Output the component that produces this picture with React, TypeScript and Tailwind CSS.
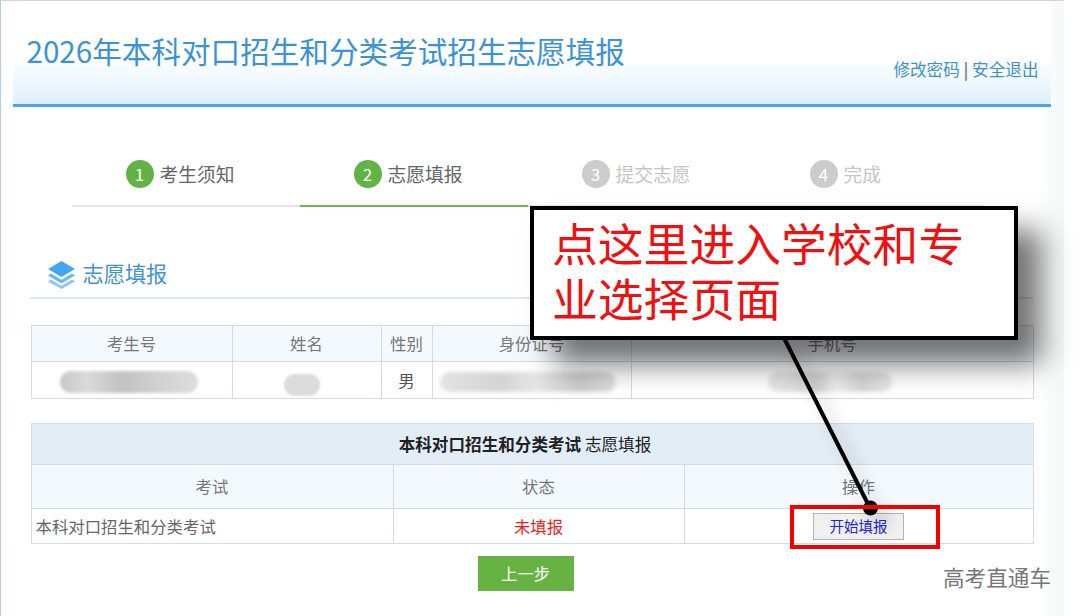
const steps = [
  { n: 1, label: "考生须知", done: true, active: false },
  { n: 2, label: "志愿填报", done: true, active: true },
  { n: 3, label: "提交志愿", done: false, active: false },
  { n: 4, label: "完成", done: false, active: false },
];

function LayersIcon() {
  return (
    <svg width="27" height="28" viewBox="0 0 27 28">
      <path d="M13.5 0 L27 8 L13.5 16 L0 8 Z" fill="#45a5f5" />
      <path d="M3 12.5 L0 14.5 L13.5 22.5 L27 14.5 L24 12.5 L13.5 18.8 Z" fill="#6db8ee" />
      <path d="M3 18.5 L0 20.5 L13.5 28 L27 20.5 L24 18.5 L13.5 24.8 Z" fill="#8cc8f0" />
    </svg>
  );
}

export default function App() {
  return (
    <div className="relative w-[1080px] h-[616px] overflow-hidden bg-white font-['Noto_Sans_CJK_SC',sans-serif]">
      <div className="h-[616px] w-[1064px] border-t border-l-[1.5px] border-t-[#d4d4d4] border-l-[#b5cfe0] bg-gradient-to-r from-white from-[97.5%] to-[#f3f8f8]">
        <div className="ml-[11.5px] flex h-[106px] w-[1038px] items-start justify-between border-b-[3px] border-[#4ba4e6] bg-gradient-to-b from-white from-[55%] to-[#dff0fc] pl-[14px] pr-[12px]">
          <h1 className="mt-[29px] text-[29.6px] leading-[42px] text-[#3a93d6]">2026年本科对口招生和分类考试招生志愿填报</h1>
          <div className="mt-[56px] text-[16.6px] leading-6 text-[#3f93c9]">
            修改密码 <span className="font-bold text-[#7d7d7d]">|</span> 安全退出
          </div>
        </div>

        <div className="ml-[70.5px] mt-[53px] flex w-[912px]">
          {steps.map((step) => (
            <div
              key={step.n}
              className={`flex w-[228px] items-center gap-[6px] border-b-2 pb-[17px] pl-[54px] ${step.active ? "border-[#6cb84a]" : "border-[#e6e6e6]"}`}
            >
              <span
                className={`flex h-[28px] w-[28px] items-center justify-center rounded-full text-[17px] text-white ${step.done ? "bg-[#62b345]" : "bg-[#cccccc]"}`}
              >
                {step.n}
              </span>
              <span className={`text-[18.8px] leading-7 ${step.done ? "text-[#666666]" : "text-[#c6c6c6]"}`}>{step.label}</span>
            </div>
          ))}
        </div>

        <div className="ml-[28.5px] mt-[54px] flex h-[38px] w-[1003px] items-start gap-[8px] border-b-2 border-[#d8e7f2] pl-[18px]">
          <LayersIcon />
          <span className="text-[21.2px] leading-[24px] text-[#3f93d0]">志愿填报</span>
        </div>

        <table className="ml-[29.5px] mt-[26px] w-[1003px] table-fixed border-collapse text-center text-[16.4px] text-[#777777]">
          <colgroup>
            <col className="w-[201px]" />
            <col className="w-[149px]" />
            <col className="w-[51px]" />
            <col className="w-[199px]" />
            <col />
          </colgroup>
          <tbody>
            <tr className="h-[36px] bg-[#f4f9fe]">
              {["考生号", "姓名", "性别", "身份证号", "手机号"].map((title) => (
                <td key={title} className="border border-[#cfdce9]">{title}</td>
              ))}
            </tr>
            <tr className="h-[37px]">
              <td className="border border-[#cfdce9] pr-[5px]">
                <span className="inline-block h-[22px] w-[138px] rounded-full bg-[linear-gradient(90deg,#c8c8c8,#dadada_20%,#c2c2c2_45%,#d0d0d0_70%,#dedede)] align-middle blur-[1.5px]" />
              </td>
              <td className="border border-[#cfdce9] pr-[10px]">
                <span className="inline-block h-[22px] w-[36px] translate-y-[3px] rounded-full bg-[#dcdcdc] align-middle blur-[1px]" />
              </td>
              <td className="border border-[#cfdce9] text-[#555555]">男</td>
              <td className="border border-[#cfdce9] pr-[8px]">
                <span className="inline-block h-[20px] w-[176px] rounded-full bg-[linear-gradient(90deg,#e2e2e2,#d4d4d4_35%,#e6e6e6_55%,#cccccc_80%,#dddddd)] align-middle blur-[2px]" />
              </td>
              <td className="border border-[#cfdce9] pr-[4px]">
                <span className="inline-block h-[20px] w-[124px] rounded-full bg-[linear-gradient(90deg,#e8e8e8,#d8d8d8_40%,#eeeeee_55%,#d6d6d6_75%,#e8e8e8)] align-middle blur-[2px]" />
              </td>
            </tr>
          </tbody>
        </table>

        <table className="ml-[29.5px] mt-[24px] w-[1003px] table-fixed border-collapse text-center text-[16.4px] text-[#777777]">
          <colgroup>
            <col className="w-[362px]" />
            <col className="w-[291px]" />
            <col />
          </colgroup>
          <tbody>
            <tr className="h-[41px] bg-[#e3edf5]">
              <td colSpan={3} className="border border-[#cfdce9] pr-[14px] text-[16.6px] text-[#222222]">
                <b>本科对口招生和分类考试</b> 志愿填报
              </td>
            </tr>
            <tr className="h-[44px] bg-[#f4f9fe]">
              <td className="border border-[#cfdce9]">考试</td>
              <td className="border border-[#cfdce9]">状态</td>
              <td className="border border-[#cfdce9]">操作</td>
            </tr>
            <tr className="h-[35px]">
              <td className="border border-[#cfdce9] pl-[4px] text-left text-[#666666]">本科对口招生和分类考试</td>
              <td className="border border-[#cfdce9] text-[#f01c1c]">未填报</td>
              <td className="border border-[#cfdce9]">
                <button className="h-[27px] w-[91px] border border-[#b4b4b4] bg-[#f0f0f0] text-[14.5px] leading-none text-[#2222e0]">开始填报</button>
              </td>
            </tr>
          </tbody>
        </table>

        <div className="ml-[476.5px] mt-[12px]">
          <button className="h-[35px] w-[96px] bg-[#66b343] text-[16.4px] text-white">上一步</button>
        </div>
      </div>

      {/* annotation layer */}
      <svg className="absolute left-0 top-0 drop-shadow-[10px_10px_8px_rgba(0,0,0,0.22)]" width="1080" height="616">
        <line x1="783" y1="336" x2="870" y2="508" stroke="#000000" strokeWidth="4" />
        <circle cx="870.5" cy="508" r="7.5" fill="#000000" />
      </svg>
      <div className="absolute left-[790px] top-[505px] h-[44px] w-[150px] border-[4px] border-[#f40000]" />
      <div className="absolute left-[530px] top-[206px] h-[134px] w-[488px] border-[4px] border-black bg-white pl-[18px] pt-[5px] text-[45.8px] leading-[55px] text-[#ee1111] shadow-[24px_24px_28px_rgba(0,0,0,0.55)]">
        点这里进入学校和专
        <br />
        业选择页面
      </div>
      <div className="absolute left-[943px] top-[561px] text-[21.6px] leading-[32px] text-[#777777]">高考直通车</div>
    </div>
  );
}
